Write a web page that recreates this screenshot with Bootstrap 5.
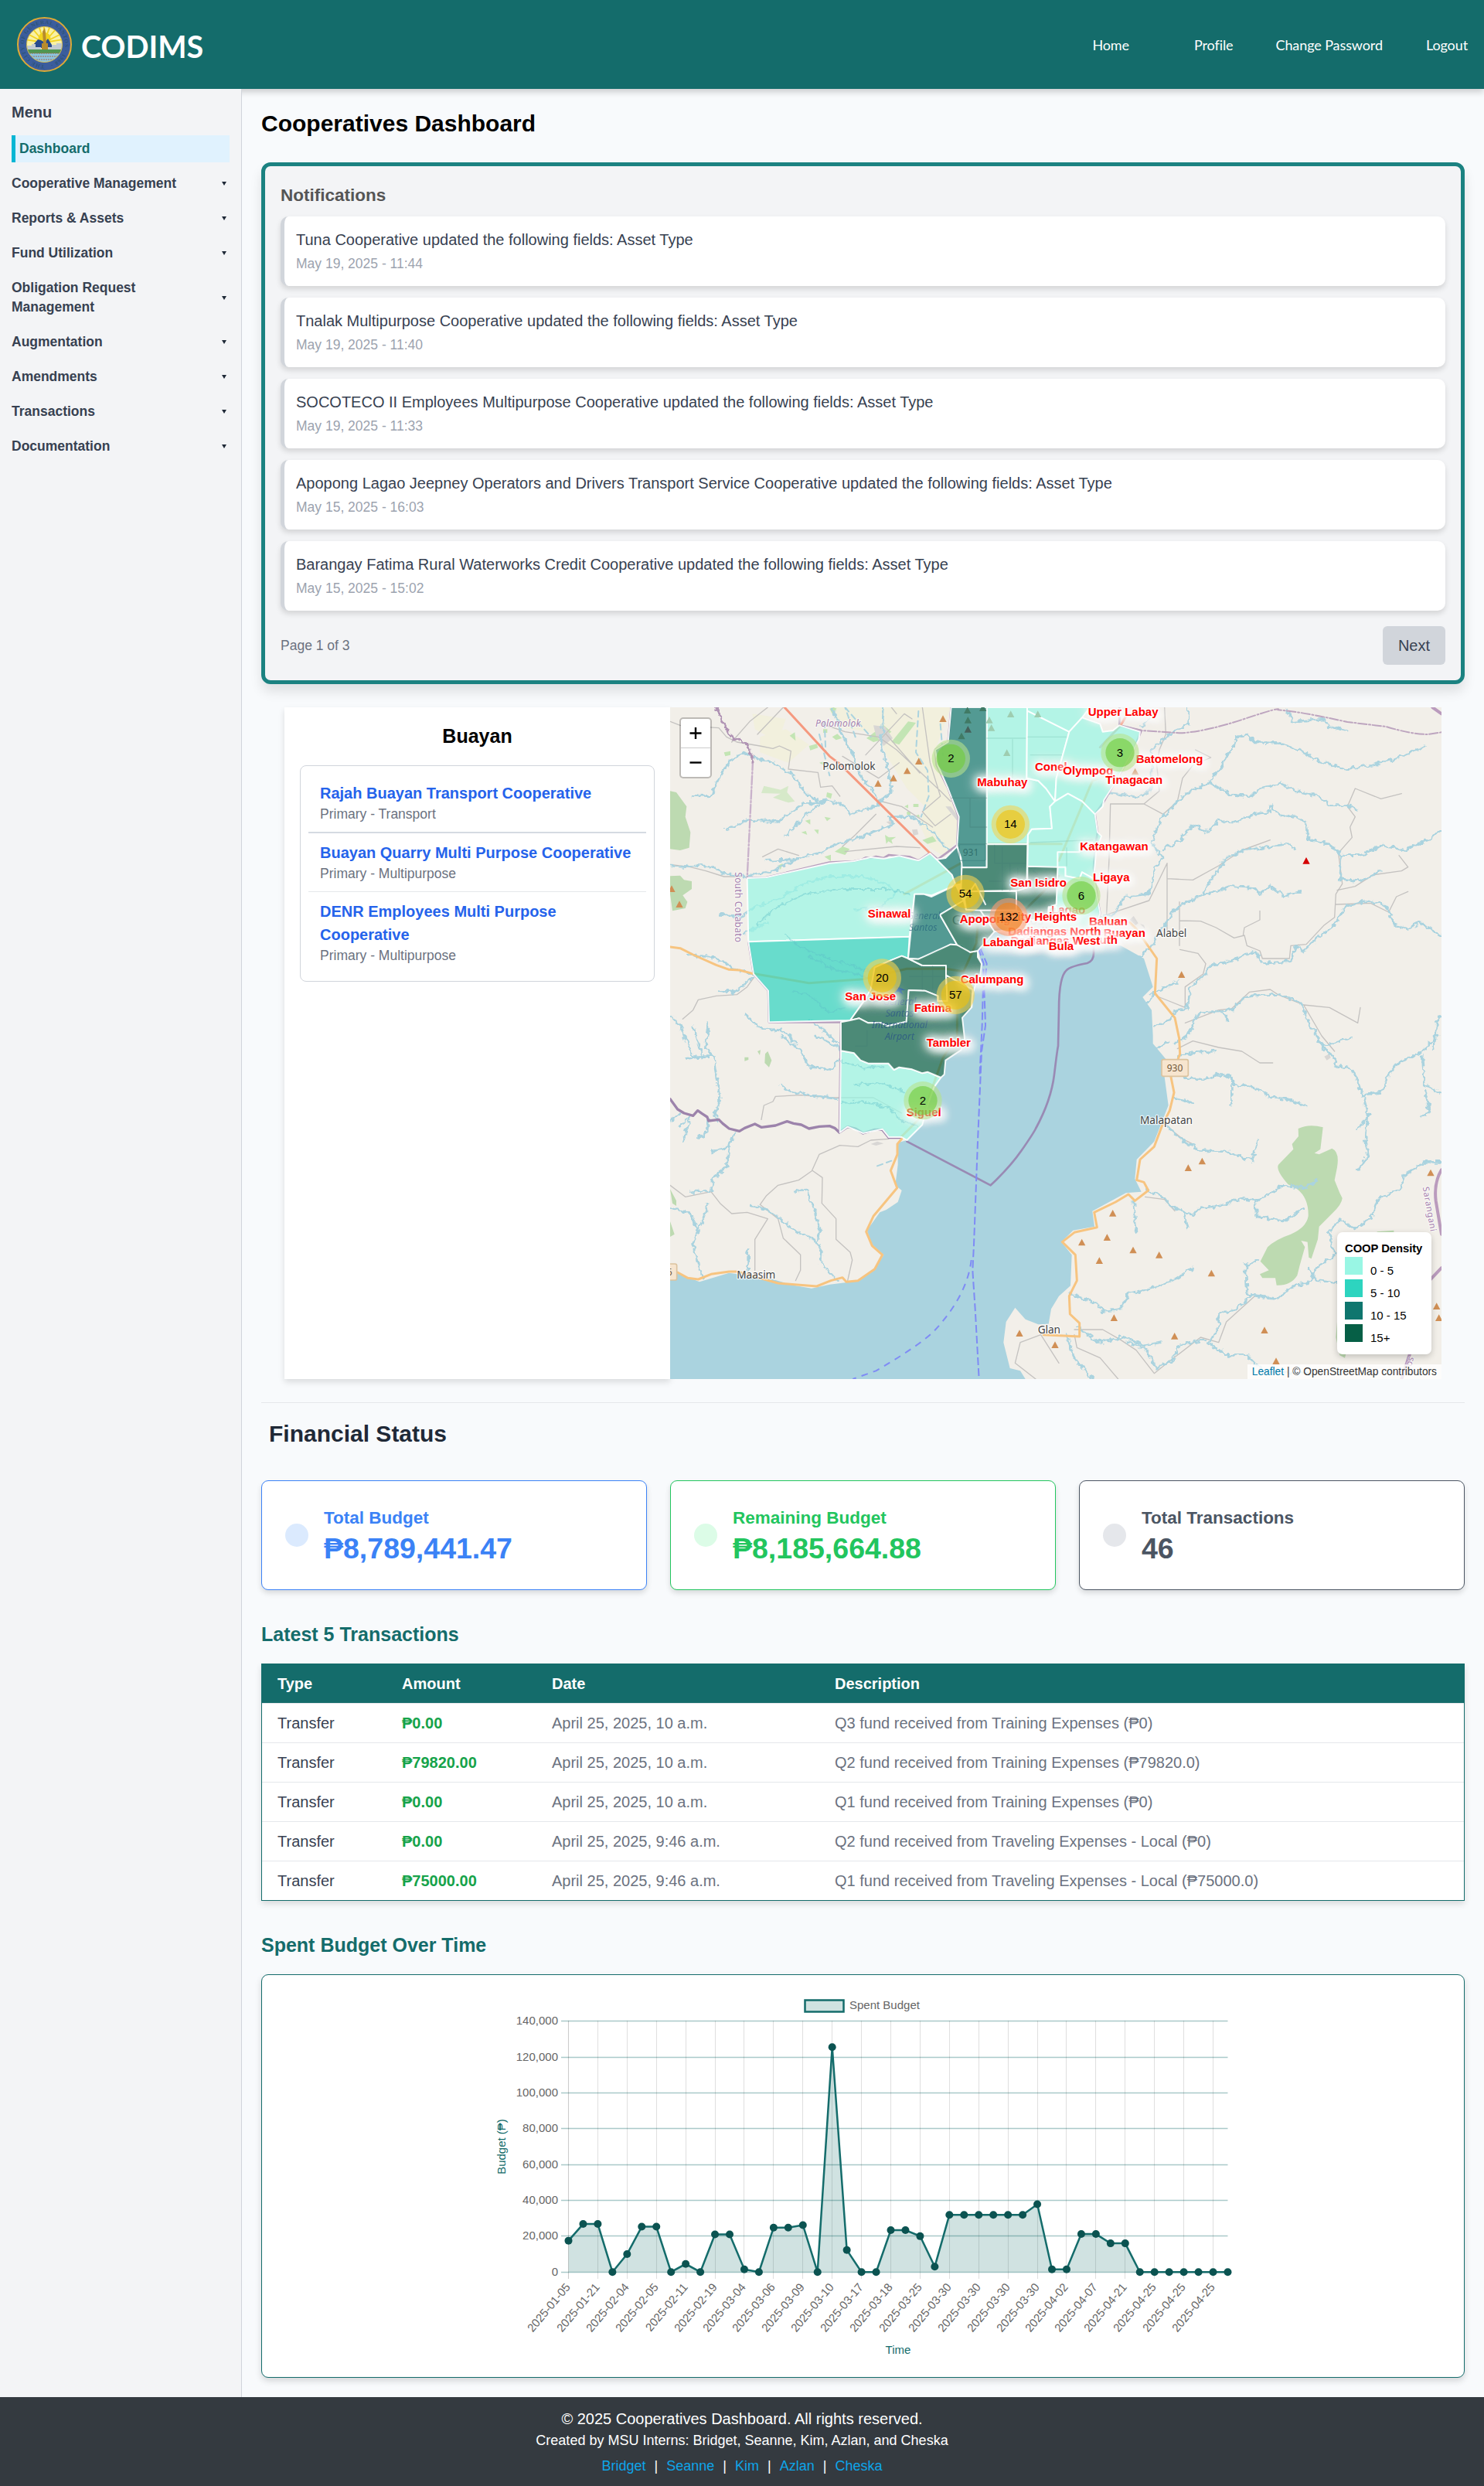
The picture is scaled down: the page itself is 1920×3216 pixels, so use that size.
<!DOCTYPE html>
<html lang="en">
<head>
<meta charset="utf-8">
<meta name="viewport" content="width=device-width, initial-scale=1">
<title>CODIMS - Cooperatives Dashboard</title>
<link href="https://cdn.jsdelivr.net/npm/bootstrap@5.3.0/dist/css/bootstrap.min.css" rel="stylesheet">
<style>
  :root { --teal: #146c6b; }
  body { font-family: "Liberation Sans", Arial, sans-serif; font-size: 20px; line-height: 30px; background: #f8fafc; color: #000; }
  h1, h2, h3, p { margin: 0; }
  .topbar { height: 115px; background: var(--teal); padding: 0 21px 0 22px; position: relative; z-index: 1; box-shadow: 0 4px 8px rgba(0,0,0,.18); }
  .brand-name { font: 700 39.5px/1 Lato, sans-serif; color: #fff; margin-left: 12px; padding-top: 5px; }
  .topnav { padding-top: 1px; }
  .topnav a { font: 400 18px/1 Lato, sans-serif; letter-spacing: -.1px; color: #fff; text-decoration: none; }
  .side { width: 313px; flex: none; background: #f3f4f6; border-right: 1px solid #d1d5db; padding: 15px; position: relative; z-index: 2; }
  .side h2 { font-size: 20px; line-height: 30px; font-weight: 700; color: #374151; margin-bottom: 15px; }
  .side a { font-size: 17.5px; line-height: 25px; font-weight: 700; color: #374151; text-decoration: none; padding: 5px 4px 5px 0; margin-bottom: 10px; }
  .side a span { max-width: 225px; }
  .side a.current { background: #e0f2fe; border-left: 5px solid #06b6d4; color: var(--teal); padding-left: 5px; }
  .side a i { border: 3px solid transparent; border-top: 5px solid #1f2937; border-bottom: 0; }
  .content { flex: 1; min-width: 0; padding: 25px; }
  .t30 { font-size: 30px; line-height: 40px; font-weight: 700; }
  .t25 { font-size: 25px; line-height: 35px; font-weight: 700; }
  .t22 { font-size: 22.5px; line-height: 35px; font-weight: 700; }
  .t17 { font-size: 17.5px; line-height: 25px; }
  .notes { margin-top: 30px; border: 5px solid #1b8281; border-radius: 12px; background: #f3f4f6; padding: 20px; box-shadow: 0 10px 15px rgba(0,0,0,.1); }
  .notes h2 { color: #555; margin-bottom: 10px; }
  .note-item { background: #fff; border-left: 5px solid #d1d5db; border-radius: 10px; padding: 15px; color: #374151; box-shadow: 0 4px 7px rgba(0,0,0,.13); margin-bottom: 15px; }
  .note-item .t17 { color: #9ca3af; margin: 4px 0 1px; }
  .btn-next { background: #d1d5db; color: #374151; font-size: 20px; line-height: 30px; padding: 10px 20px; border-radius: 6px; border: 0; }
  .geo { margin: 30px 30px 0; height: 869px; }
  .geo-list { width: 499px; padding: 20px; background: #fff; box-shadow: 0 4px 8px rgba(0,0,0,.12); }
  .geo-list h2 { color: #000; margin-bottom: 20px; }
  .coops { border: 1px solid #d1d5db; border-radius: 8px; padding: 10px; }
  .coops > div { padding: 10px 15px; border-bottom: 1px solid #e5e7eb; }
  .coops > div:first-child { border-bottom: 2px solid #d5dae2; }
  .coops > div:last-child { border: 0; }
  .coops a { color: #2563eb; font-weight: 700; text-decoration: none; }
  .coops .t17 { color: #6b7280; }
  .geo-map { width: 998px; background: #f2efe9; overflow: hidden; }
  .geo-map > svg { display: block; }
  .zoomer { position: absolute; left: 12px; top: 13px; width: 42px; border: 2px solid rgba(0,0,0,.22); border-radius: 5px; background-clip: padding-box; background-color: #fff; }
  .zoomer div + div { border-top: 1px solid #ccc; }
  .zoomer svg { display: block; margin: auto; }
  .density { position: absolute; right: 13px; bottom: 32px; width: 122px; height: 158px; background: #fff; border-radius: 7px; padding: 10px; box-shadow: 0 3px 8px rgba(0,0,0,.2); font-size: 15px; line-height: 22px; }
  .density b { display: block; white-space: nowrap; font-size: 14.8px; letter-spacing: -.05px; }
  .density .sw { width: 23px; height: 23px; margin-right: 10px; }
  .density .lg { height: 29px; }
  .density .lg span:last-child { padding-top: 7px; }
  .credit { position: absolute; right: 0; bottom: 0; background: rgba(255,255,255,.8); font-size: 13.75px; line-height: 19px; padding: 0 6px; color: #333; white-space: nowrap; }
  .credit a { color: #0078a8; text-decoration: none; }
  .redname text { font: 700 45px "Liberation Sans", sans-serif; fill: #f00; stroke: #fff; stroke-width: 10; stroke-opacity: .75; paint-order: stroke; text-shadow: 0 0 12px #fff, 4px 4px 12px #fff, 0 0 20px #fff; }
  .town { font-family: "Noto Sans", sans-serif; fill: #444; stroke: #fff; stroke-opacity: .7; stroke-width: 8; paint-order: stroke; }
  .rule { border-top: 1px solid #e5e7eb; margin-top: 30px; padding-top: 20px; }
  .rule h2.fin { color: #1f2937; padding-left: 10px; }
  .rule h2.sub { color: var(--teal); }
  .stats { gap: 30px; margin: 40px 0; }
  .stat { flex: 1; border: 1px solid; border-radius: 9px; background: #fff; padding: 30px; gap: 20px; box-shadow: 0 4px 7px rgba(0,0,0,.13); }
  .stat .dot { width: 30px; height: 30px; border-radius: 50%; }
  .stat .num { font-size: 37.5px; line-height: 45px; font-weight: 700; }
  .ledger { margin: 20px 0 40px; width: 100%; table-layout: fixed; border: 1px solid var(--teal); border-collapse: separate; border-spacing: 0; background: #fff; box-shadow: 0 4px 8px rgba(0,0,0,.13); }
  .ledger th, .ledger td { padding: 10px 20px; }
  .ledger th { background: var(--teal); color: #fff; height: 50px; }
  .ledger td { border-top: 1px solid #e5e7eb; height: 51px; color: #6b7280; }
  .ledger td:first-child { color: #374151; }
  .ledger td:nth-child(2) { color: #16a34a; font-weight: 700; }
  .plot { margin-top: 20px; height: 522px; border: 1px solid var(--teal); border-radius: 9px; background: #fff; box-shadow: 0 4px 8px rgba(0,0,0,.15); }
  .plot svg { display: block; font: 15px "Liberation Sans", sans-serif; }
  .foot { height: 115px; background: #343a40; color: #fff; text-align: center; padding-top: 13px; }
  .foot .small2 { font-size: 18px; line-height: 27px; }
  .foot a { color: #0ea5e9; text-decoration: none; margin: 0 6px; }
  .foot a:hover { text-decoration: underline; }
</style>
</head>
<body>
<header class="topbar d-flex align-items-center justify-content-between">
  <div class="d-flex align-items-center">
    <svg width="71" height="71" viewBox="0 0 71 71">
      <circle cx="35.500" cy="35.500" r="34.500" fill="#3b5d9d" stroke="#e0aa35" stroke-width="2"/>
      <defs><path id="ring" d="M35.500 62a26.500 26.500 0 1 1 .1 0"/><clipPath id="disc"><circle cx="35.500" cy="35.500" r="23"/></clipPath></defs>
      <text font-size="7" font-family="Liberation Serif, serif" font-weight="700" fill="#2c5377"><textPath href="#ring" textLength="158">THE CITY OF GENERAL SANTOS · 1968 ·</textPath></text>
      <g clip-path="url(#disc)">
        <circle cx="35.500" cy="35.500" r="23" fill="#f9f1a4"/>
        <g stroke="#f1d21e" stroke-width="1.800"><path d="M35 33L14 22M35 33L20 15M35 33L28 11M35 33V10M35 33L43 11M35 33L51 15M35 33L57 22M35 33L60 29M35 33L10 29"/></g>
        <circle cx="35.500" cy="28" r="8" fill="#f1d21e"/>
        <path d="M20 37L27 29L31 30L36 33L40 28L45 36L50 40H18Z" fill="#274a8c"/>
        <path d="M12 37h7v-2h5v4h7v5H12zM40 39h5v-3h6v-2h8v10H40z" fill="#c2cbd0"/>
        <path d="M12 42h48v6H12z" fill="#4f9652"/>
        <path d="M12 47h48v13H12z" fill="#8cc4df"/>
        <path d="M13 47h45M18 51h36M22 55h28" stroke="#a06d4e" stroke-width="1.200" stroke-dasharray="2 1"/>
        <path d="M33 19l3-5 1 6 1 14h2v8H32v-8h2z" fill="#b78b2d"/>
      </g>
      <circle cx="35.500" cy="35.500" r="23" fill="none" stroke="#d5ba51" stroke-width="1"/>
    </svg>
    <div class="brand-name">CODIMS</div>
  </div>
  <nav class="topnav d-flex align-items-center">
    <a href="#" style="margin-right:84px">Home</a><a href="#" style="margin-right:55px">Profile</a><a href="#" style="margin-right:56px">Change Password</a><a href="#">Logout</a>
  </nav>
</header>

<div class="d-flex align-items-stretch">
  <aside class="side">
    <h2>Menu</h2>
    <nav class="d-flex flex-column">
      <a class="current" href="#">Dashboard</a>
      <a class="d-flex align-items-center justify-content-between" href="#"><span>Cooperative Management</span><i></i></a>
      <a class="d-flex align-items-center justify-content-between" href="#"><span>Reports &amp; Assets</span><i></i></a>
      <a class="d-flex align-items-center justify-content-between" href="#"><span>Fund Utilization</span><i></i></a>
      <a class="d-flex align-items-center justify-content-between" href="#"><span>Obligation Request<br>Management</span><i></i></a>
      <a class="d-flex align-items-center justify-content-between" href="#"><span>Augmentation</span><i></i></a>
      <a class="d-flex align-items-center justify-content-between" href="#"><span>Amendments</span><i></i></a>
      <a class="d-flex align-items-center justify-content-between" href="#"><span>Transactions</span><i></i></a>
      <a class="d-flex align-items-center justify-content-between" href="#"><span>Documentation</span><i></i></a>
    </nav>
  </aside>

  <main class="content">
    <h1 class="t30">Cooperatives Dashboard</h1>

    <section class="notes">
      <h2 class="t22">Notifications</h2>
      <div class="note-item"><p>Tuna Cooperative updated the following fields: Asset Type</p><p class="t17">May 19, 2025 - 11:44</p></div>
      <div class="note-item"><p>Tnalak Multipurpose Cooperative updated the following fields: Asset Type</p><p class="t17">May 19, 2025 - 11:40</p></div>
      <div class="note-item"><p>SOCOTECO II Employees Multipurpose Cooperative updated the following fields: Asset Type</p><p class="t17">May 19, 2025 - 11:33</p></div>
      <div class="note-item"><p>Apopong Lagao Jeepney Operators and Drivers Transport Service Cooperative updated the following fields: Asset Type</p><p class="t17">May 15, 2025 - 16:03</p></div>
      <div class="note-item mb-0"><p>Barangay Fatima Rural Waterworks Credit Cooperative updated the following fields: Asset Type</p><p class="t17">May 15, 2025 - 15:02</p></div>
      <div class="d-flex justify-content-between align-items-center" style="margin-top:20px">
        <span class="t17" style="color:#6b7280">Page 1 of 3</span>
        <button class="btn btn-next">Next</button>
      </div>
    </section>

    <section class="geo d-flex">
      <div class="geo-list">
        <h2 class="t25 text-center">Buayan</h2>
        <div class="coops">
          <div><a href="#">Rajah Buayan Transport Cooperative</a><p class="t17">Primary - Transport</p></div>
          <div><a href="#">Buayan Quarry Multi Purpose Cooperative</a><p class="t17">Primary - Multipurpose</p></div>
          <div><a href="#">DENR Employees Multi Purpose Cooperative</a><p class="t17">Primary - Multipurpose</p></div>
        </div>
      </div>
      <div class="geo-map position-relative">
        <svg width="998" height="869" viewBox="21 15 2994 2607" fill="none" stroke-linejoin="round" stroke-linecap="round">
          <defs>
            <filter id="wob" x="0" y="0" width="3040" height="2640" filterUnits="userSpaceOnUse"><feTurbulence type="fractalNoise" baseFrequency=".05" numOctaves="2" seed="4"/><feDisplacementMap in="SourceGraphic" scale="26" xChannelSelector="R" yChannelSelector="G"/></filter>
            <path id="peak" d="M0-14L14 12H-14Z"/>
          </defs>
          <rect x="21" y="15" width="2994" height="2607" fill="#f2efe9"/>
          <!-- farmland and vegetation -->
          <path fill="#f1f0d8" d="M640 15H1110L1050 180L1100 330L1140 440L1130 540L1080 590L1030 560L990 470L1010 400L940 330L860 200L830 120L680 90ZM340 40L470 60L440 150L350 100ZM370 130L470 100L560 160L480 230L370 190Z" opacity=".75"/>
          <g fill="#bddab1">
            <path d="M21 340L45 345L85 400L80 440L100 500L95 560L60 570L21 565ZM21 670L60 668L75 685L105 690L105 720L70 745L88 770L80 795L30 805L21 740Z"/>
            <path d="M2459 1650Q2500 1630 2555 1645L2545 1730L2522 1745L2540 1750L2590 1727Q2620 1740 2610 1800L2600 1850L2620 1900L2630 1920Q2628 1945 2590 1980L2540 2030L2535 2080L2510 2155L2500 2150L2495 2090L2470 2085L2485 2110L2465 2180L2455 2220Q2430 2260 2375 2258L2370 2230L2320 2230L2310 2215L2345 2200L2312 2165L2340 2110Q2370 2080 2430 2060Q2490 2035 2498 1990Q2500 1920 2455 1885L2420 1867Q2370 1810 2382 1790L2440 1730L2435 1710L2460 1680Z"/>
            <path d="M2610 2400L2650 2500L2640 2540L2620 2530L2605 2460ZM2765 2050L2830 2045V2060H2765Z"/>
            <path d="M21 1885L45 1930L45 1950L30 1940ZM21 2010L38 2060L21 2070ZM390 1360L400 1350L415 1385L405 1412L388 1395ZM310 1373l15 0v10l-15 5zM360 1350l12-5-3 20z"/>
          </g>
          <g fill="#c3e5b4">
            <path d="M650 130L670 118L688 135L665 142ZM485 125L505 112L508 145ZM783 135L850 85L880 110L830 145L810 150ZM880 150L945 70L975 75L910 160ZM560 165l30-8 5 15-30 10zM230 190l25-5v15l-20 5zM630 345l20 5-5 20-18-8zM545 455l20-5 0 20zM620 440l25 5-15 12zM580 490l18 0-3 18zM530 500l18-5 5 15zM855 510L870 520L898 518L880 530L885 545L868 535L860 545ZM660 575L690 555L718 565L700 588ZM1000 530L1040 515L1055 535L1020 545ZM930 400l15-8v15zM965 390h20v12h-20zM940 420h14v12h-14zM975 435l12-4 3 14zM620 595l25-8v25zM440 630l18-10-8 25zM640 20L655 15L668 20L650 40ZM615 100h16v14h-16zM600 230l18-5v16z"/>
            <path d="M385 320L450 335L480 320L475 345L505 380L480 385L420 365L450 350L375 348Z" opacity=".6"/>
          </g>
          <path fill="#d8d6d4" d="M810 85l45 5 30 45-35 30-30-40zM960 490l20-2 5 20-20 5zM860 460l20-5v20zM1090 400l20 0 30 40-5 15zM800 1710l25-10 25 8-30 8zM1805 840l15-15 18 28-10 8zM1845 855l15 5 5 15zM2560 1370l20-10 5 15-15 10z"/>
          <!-- small roads -->
          <g stroke="#c4c2c0" stroke-width="4">
            <path d="M21 70L60 85L210 95L240 130L280 150L370 165L420 175L445 165L490 185L480 255L595 268L605 325L650 320L680 360M400 15L330 70L260 150M460 15L360 120M600 75L700 110L830 130L900 180L1070 340L1110 380M1070 360L1000 420L1050 475L1110 430M820 375L920 400L1040 480M690 205L830 290L910 230M780 200L930 40L960 60M860 120L990 270M1000 15L1030 230L1070 360M380 595L440 565L520 590M700 575L900 555L990 560M820 430L740 510L690 555M21 625L100 635L160 650L230 672L300 672M70 1225L110 1190L130 1150L200 1135L280 1130L320 1100L345 1065M375 1615L385 1560L420 1545L430 1525L530 1520L650 1530L810 1530L920 1590M21 1870L80 1915L180 1895L215 1940L260 1980L320 1975L400 2000L350 2080L350 2200M570 1815L520 1850L440 1870L395 1910L370 1945L440 2000L460 2075L527 2140L527 2200L508 2240M870 1690L800 1695L750 1720L680 1715L600 1750L572 1812L612 1840L610 1940L665 2000L665 2080L720 2130L728 2160L710 2240"/>
            <path d="M1940 15L1945 120L1920 180L1910 240L1920 340L1860 390H1730L1725 600L1715 820L1880 765L1950 620V890M1950 680L2050 685L2150 630L2240 570L2350 530M1860 390L1935 430L1990 380L2010 290L2050 240L2120 210L2060 180M1998 770V940M1998 843L2080 845L2140 870L2210 910L2250 900L2260 940L2310 960L2320 990H2425L2430 940L2490 935L2560 860L2600 830L2605 740L2630 700L2615 580L2668 520L2660 480L2680 440L2650 400L2680 330L2780 370L2860 350M2245 900L2250 870L2310 840L2310 805M2000 955L2070 970L2100 1010L2090 1050L2020 1100L2020 1180L1920 1140M2610 725L2680 710L2750 665L2860 650L2885 635L2850 590M2605 780L2740 775L2810 810L2840 750L2885 730M2480 1170L2580 1180L2690 1240L2700 1180M1990 1340L2050 1310L2150 1335L2240 1350L2310 1395L2360 1395M2020 1240L2150 1190L2200 1185L2270 1120L2350 1110L2380 1130L2480 1170L2550 1290L2600 1350M1960 1650L2010 1690L2050 1710M1865 1915L1940 1925L1980 1970M1530 2560L1460 2450L1380 2480L1360 2560L1440 2622M1590 2430L1700 2430L1770 2470L1830 2510L1900 2600L1950 2560L2080 2460L2150 2480L2180 2400L2290 2300M1590 2450L1600 2500L1690 2540L1760 2622M880 15L900 40"/>
          </g>
          <!-- rivers -->
          <g stroke="#aad3df" stroke-width="8" filter="url(#wob)">
            <path d="M110 355L180 360L210 290L245 230L300 190L360 215L420 230L500 280L540 340L600 385L640 375L700 400L720 430L830 395L830 370L760 280L730 200L690 120L650 15M235 490L330 450L440 460L540 385L590 385M470 515L540 440L600 395M390 610L500 605L600 580L670 545L760 520L830 490L890 470L870 440L970 440L1040 500L1110 580M830 390L880 340L870 260L840 170L850 15M21 630L80 635L130 625L180 635L230 660L320 670L420 650L520 600M215 820L300 825L350 790L440 760L540 700L640 670L760 670L860 700L900 730L840 790L740 800M310 890L400 850M85 970L200 990L260 1025L345 1050M210 1115L270 1120L320 1080L345 1065M315 1210L370 1260L460 1270L510 1320M560 1230L620 1270L670 1320M21 1210L60 1250L110 1370L190 1370L200 1450L215 1540L195 1600L210 1620M110 1250L150 1380M170 1240L160 1340L190 1370M85 1378L150 1370M450 1290L520 1340L560 1410L640 1420L680 1380M590 1290L680 1340M450 1480L480 1505L560 1520L670 1535M21 1625L60 1590M60 1640L100 1600L70 1700M170 1620L165 1660L130 1690M270 1670L250 1720L185 1740M250 1720L240 1800L190 1840L180 1890L100 1895M21 1960L95 1975L130 2040L155 1990L165 1940M130 2040L110 2100L130 2180L150 2235M340 1950L400 1965L510 2050L590 2085L610 2130L605 2170L670 2240M505 1895L550 1890L580 1960L600 2040L595 2080M323 2120V2200M1300 2290L1340 2340"/>
            <path d="M1720 350L1780 355L1840 365L1890 330L1890 180L1960 120L2030 80V15M1850 90L1880 60M2410 20L2440 70L2560 60L2580 90L2650 108M2950 165L2850 210L2750 240L2640 255L2530 220L2460 180L2390 155L2290 150L2260 120L2220 130L2200 180L2180 200L2160 250L2110 310L2030 345L1990 380L1940 430L1910 480L1890 540L1935 600L1900 640L1880 740L1790 750L1740 820L1690 830M2120 310L2200 355L2280 360L2310 330L2390 310L2450 340L2540 360L2580 395L2650 395L2690 415M1930 570L2000 530L2050 470L2110 500L2150 450L2200 465L2290 430L2350 420L2355 395L2380 430L2440 440L2490 460L2500 530L2580 545L2630 590L2700 590L2780 550L2870 570L2960 530L3015 490M2450 570L2420 545L2350 555L2250 570L2180 600L2130 670L2100 720L2090 745L2030 770L1980 800L1940 860L1890 940L1840 985M2090 745L2190 710L2290 715L2310 740L2350 710L2400 745L2470 730M2630 590L2620 680L2700 690L2780 650M3015 900L2960 870L2930 850L2880 875L2830 860L2820 820L2790 780L2730 765L2640 790L2600 860L2520 920L2480 960L2450 940L2430 1000L2320 1010L2290 960L2200 1000L2120 1020L2090 1060L2040 1100L2030 1180L1990 1190L1960 1230L1900 1255M1980 1320L2030 1290L2070 1200L2200 1190L2250 1140L2330 1130L2390 1130L2470 1160L2490 1220L2530 1290L2560 1330L2660 1300M2160 1195L2190 1235M1900 1340L1960 1310M3015 1210L3000 1230L2985 1340M1990 1370L2050 1355L2140 1350M2000 1450L2090 1460L2140 1440L2200 1445L2210 1480L2290 1490L2360 1530L2430 1540L2485 1560M2200 1460V1555M1980 1530L2050 1550M2540 1310L2560 1345L2600 1370L2600 1400L2670 1420L2710 1520L2780 1510L2810 1440L2850 1390L2930 1360L2970 1320L3000 1290M2710 1520L2730 1590L2720 1700L2730 1760L2690 1810M2740 1590L2690 1650M2940 1370L2950 1480L3010 1510M2950 1500L2970 1590L2940 1600M3015 1780L2950 1780L2870 1830L2860 1880L2770 1920L2740 2000L2680 2040L2620 2000L2580 2050L2600 2140L2530 2190L2500 2250L2440 2260L2380 2310L2310 2300L2260 2290L2255 2180L2300 2160M2500 2190L2530 2240L2620 2250M2290 2290L2220 2350L2150 2370L2150 2430L2110 2480L2180 2530L2260 2530L2320 2590L2500 2600M1950 1640L2000 1690L2080 1735L2180 1740L2280 1775L2300 1700M1870 1890L1930 1910L1960 1950L2050 1985L2070 1960L2150 1950L2240 1920L2300 1930L2400 1870L2480 1880L2530 1855M2290 1930L2300 1990L2400 2010L2480 1960M1820 1930L1830 2050M2010 1960L2030 2040M1570 2290L1680 2330L1700 2360L1770 2350L1800 2290L1890 2270L1990 2230L2050 2190M1600 2420L1680 2480L1780 2460L1860 2490L1930 2480M1800 2480L1860 2500L1910 2580L1970 2550L2000 2490L2100 2470M1560 2450L1590 2540L1660 2622M1870 1170L1900 1120L1990 1080"/>
          </g>
          <g stroke="#aad3df" stroke-width="6" stroke-dasharray="22 16"><path d="M620 70L625 190M740 130L700 15M985 30L975 190L1020 260L1025 360L995 440M1070 80L1080 200M700 15L800 130M825 1795L880 1775M600 120L640 280"/></g>
          <!-- sea -->
          <path fill="#aad3df" d="M1280 885L1240 920L1215 950L1230 1010L1200 1100L1195 1180L1155 1220L1165 1310L1150 1345L1090 1385L1085 1440L1050 1480L1000 1635L940 1695L905 1705L905 1790L895 1870L920 1890L905 1935L860 1965L835 1975L785 2045L805 2100L850 2140L815 2195L750 2240L700 2248L640 2255L570 2270L500 2258L420 2235L250 2210L135 2245L60 2215L21 2205V2622H1400L1380 2590L1340 2580L1315 2480L1325 2400L1360 2345L1400 2390L1450 2410L1490 2408L1500 2350L1530 2300L1575 2260L1580 2140L1540 2090L1585 2045L1668 2030L1660 1970L1790 1900L1850 1895L1825 1845L1832 1770L1900 1700L1955 1560L1940 1450L1945 1380L1895 1320L1895 1290L1890 1190L1855 1140L1895 1100L1860 990L1770 940L1660 930L1560 955L1400 910Z"/>
          <path stroke="#c9b2cb" stroke-width="7" stroke-dasharray="34 8 6 8" d="M342 225L320 678"/>
          <path stroke="#b093b4" stroke-width="9" stroke-dasharray="22 7" filter="url(#wob)" d="M200 15L235 90L260 130L325 160L342 225"/>
          <path stroke="#b79fbd" stroke-width="8" d="M320 678L395 675L640 617L735 612L765 606L780 598L800 600L820 594L850 600L870 588L910 592L950 595L985 610L1030 580L1060 605L1135 550L1140 440L1100 330L1055 240L1050 180L1100 150L1112 15M1765 15L1765 85L1850 105L1820 180L1740 320L1705 380L1670 430L1680 500L1670 560L1665 640L1680 760L1690 815L1665 900M325 925L345 1050L402 1115L405 1237H684L678 1665"/>
          <path stroke="#9c83ab" stroke-width="10" d="M21 1535L50 1575L75 1590L110 1600L128 1580L145 1592L165 1605L170 1620L210 1615L225 1630L250 1650L290 1660L310 1648L350 1632L375 1645L430 1638L475 1622L500 1630L530 1635L560 1650L600 1642L640 1640L660 1648L678 1665L710 1643L740 1650L770 1668L815 1654L845 1654L870 1685H920"/>
          <path stroke="#998ab4" stroke-width="8" d="M940 1700L1265 1870Q1340 1800 1385 1735T1440 1650Q1500 1540 1512 1440T1527 1330L1530 1190Q1530 1060 1560 1035Q1575 1020 1640 1008Q1665 1000 1665 970V900"/>
          <path stroke="#bda5bf" stroke-width="6" stroke-dasharray="34 8 6 8" d="M1765 85L1850 105L2000 115Q2100 110 2250 60T2380 25Q2460 30 2650 72L2800 90Q2900 120 2960 120L3015 112"/>
          <path stroke="#ba9bbd" stroke-width="12" d="M3015 1810Q2985 1860 2993 1930L3015 2060M3015 2190L2940 2270Q2890 2400 2900 2500L2860 2622M2980 15L3015 40"/>
          <g stroke="#7f8bf5" stroke-width="6" stroke-linecap="butt"><path stroke-dasharray="30 12" d="M1225 950L1250 1010L1240 1110L1245 1250L1230 1350L1215 1700L1200 2100L1195 2200L1205 2350L1220 2622M1218 950L1238 1010L1232 1250L1222 1450"/><path stroke-dasharray="26 22" d="M1190 2160Q1175 2290 1060 2420Q1010 2480 820 2590L730 2622"/></g>
          <g stroke="#f7c480" stroke-width="9"><path d="M21 945L60 950L110 975L200 1015L250 1033L290 1035L340 1048M1805 850L1830 875L1910 990L1903 1125L1980 1220L1997 1300L2000 1360L1985 1400L1965 1450L1977 1510L1960 1580L1930 1640L1900 1720L1845 1770L1832 1850L1860 1858L1877 1890L1825 1930L1800 1905L1750 1935L1667 1975L1678 2033L1590 2053L1543 2090L1594 2140L1600 2240L1570 2300L1573 2370L1610 2405V2457L1470 2450M920 1690L903 1710V1750L877 1813L902 1880L810 1990L782 2050L805 2105L845 2140L815 2195L750 2240L705 2245L690 2228L645 2240L590 2262L440 2250L280 2205H250L180 2215L130 2235L90 2230L50 2208"/>
            <path d="M340 1048L560 1085L770 1070L940 1030H1090L1160 1040L1210 930L1215 860L1160 740M930 740L1150 620M1250 545H1540M1135 1180V1290L1080 1375L1000 1600L920 1680M1530 610L1660 300L1740 270"/></g>
          <path stroke="#f5997f" stroke-width="9" d="M465 15L640 205L680 235L1030 582M1790 15V50L1770 85"/>
          <path stroke="#dcaa8c" stroke-width="9" d="M1770 85L1690 170M1400 800L1530 670"/>
          <text x="1115" y="857" font-size="50" font-family="Noto Sans, sans-serif" fill="#555">General Santos</text>
          <!-- barangay density -->
          <g fill-opacity=".7" stroke="#fff" stroke-width="6" stroke-opacity=".9">
            <g fill="#99f6e4">
              <path d="M320 678L395 675L640 620L735 612L800 597L850 602L910 592L985 610L1030 582L1055 605L1115 665L1130 705L1035 745L1005 740L970 740L950 905L325 925Z"/>
              <path d="M684 1348L735 1357L760 1385L790 1397H868L890 1422L910 1412L960 1420L1000 1435L1020 1430L1072 1452L1045 1490L1020 1560L1000 1635L940 1695L920 1683H870L845 1652L770 1668L710 1643L680 1665Z"/>
              <path d="M1250 15H1407L1405 290L1450 300L1480 330L1515 380L1495 400L1503 485L1425 488L1410 510L1408 547H1250Z"/>
              <path d="M1407 28L1570 110L1520 290L1515 380L1480 330L1450 300L1405 290Z"/>
              <path d="M1407 15H1650L1620 55L1570 110L1407 28Z"/>
              <path d="M1570 110L1620 55L1690 80L1700 110L1740 105L1765 85L1845 110L1840 140L1820 180L1740 320L1705 375L1700 400L1670 430L1620 380L1565 350L1515 380L1520 290Z"/>
              <path d="M1515 380L1565 350L1620 380L1670 430L1680 500L1695 515L1675 570L1665 680L1620 655L1610 680L1555 670V640L1408 632L1410 510L1425 488L1503 485L1495 400Z"/>
              <path d="M1525 635H1555V670L1610 680L1620 655L1665 680L1680 760L1690 815L1660 900L1560 930L1500 870L1490 795L1520 780Z"/>
            </g>
            <path fill="#2dd4bf" d="M325 925L950 905L945 990L920 980L870 1000L815 1025L800 1110L770 1160L720 1230L405 1237L402 1115L345 1050Z"/>
            <g fill="#0f766e">
              <path d="M1112 15H1250V637H1153L1150 600L1135 555L1142 440L1100 330L1060 240L1050 180L1100 150Z"/>
              <path d="M1135 555L1153 620V700L1130 705L1115 665L1055 605L1090 600Z"/>
              <path d="M970 740L1005 740L1035 750L1130 705L1160 765L1068 820L1135 937L1110 935L1060 965L985 992L945 990Z"/>
            </g>
            <g fill="#065f46">
              <path d="M870 1000L920 980L945 990L1000 1017H1092V1055L1097 1155L1060 1155V1135L1010 1115L947 1113L938 1235L865 1252L840 1240L790 1240L755 1222L720 1230L770 1160L800 1110L815 1025Z"/>
              <path d="M945 990L985 992L1110 935L1155 938L1185 965L1215 960V985L1230 1010L1225 1050L1205 1095L1195 1130L1092 1055V1017H1000Z"/>
              <path d="M947 1113L1010 1115L1060 1135V1155H1097L1092 1055L1195 1110L1190 1180L1155 1220L1165 1310L1150 1345L1090 1385L1085 1440L1072 1452L1020 1430L1000 1435L960 1420L910 1412L890 1422L868 1397H790L760 1385L735 1357L684 1348V1237L720 1230L755 1222L790 1240L840 1240L865 1252L938 1235Z"/>
              <path d="M1068 820L1160 765L1170 800H1225L1280 885L1215 960L1185 965L1135 937Z"/>
              <path d="M1250 547H1408L1405 725L1150 730L1153 637H1250Z"/>
              <path d="M1160 730L1365 728V803H1225L1170 800Z"/>
              <path d="M1408 632L1525 635L1520 780L1490 795L1485 840H1400L1365 803V728L1408 715Z"/>
              <path d="M1225 803H1365L1400 840L1370 875L1280 885Z"/>
            </g>
            <path d="M1490 790h30v30h-30zM1525 635V577H1610V545L1660 540M1160 765L1205 700L1245 780"/>
          </g>
          <path stroke="#e8fbf7" stroke-opacity=".75" fill="#b3dcd3" fill-opacity=".7" d="M1400 850H1500L1560 930L1420 915L1370 895Z"/>
          <g stroke="#437b76" stroke-opacity=".35" stroke-width="4"><path d="M1112 367H1250M1185 367V480H1250M1140 545H1250M1280 550V620H1400M1310 560V725M1260 690H1400M1340 620V725M1370 640V790M1430 650L1500 700M1200 860L1260 900M950 1060H1080M1000 1020V1110M1040 1020V1110M785 1270V1330H740"/></g>
          <g stroke="#7fc7b8" stroke-opacity=".4" stroke-width="4"><path d="M1250 135H1400M1350 140V290M1410 130H1560M1420 200H1540M1420 540L1660 530M1560 560V630"/></g>
          <g stroke="#5dbfc9" stroke-opacity=".4" stroke-width="6" filter="url(#wob)"><path d="M470 900L530 950L640 990L790 1040M560 980L650 1030L780 1060M500 1120L560 1130L640 1200L700 1180M360 860L420 800L540 740L700 720L860 720L950 740M690 1390L770 1415L850 1405M735 1480L830 1470L930 1505M690 1550L780 1545L870 1570L920 1620L980 1640"/></g>
          <g font-family="Noto Sans, sans-serif" font-style="italic">
            <g fill="#a57fae" stroke="#fff" stroke-width="6" stroke-opacity=".6" paint-order="stroke" font-size="36"><text x="585" y="90" textLength="175">Polomolok</text><text transform="translate(272 655) rotate(90)" font-style="normal" textLength="272">South Cotabato</text><text transform="translate(2942 1878) rotate(80)" font-style="normal" font-size="34" textLength="175">Sarangani</text><text transform="translate(2898 2575) rotate(-75)" font-style="normal" font-size="34">os</text></g>
            <g fill="#23607c" opacity=".65" font-size="37" text-anchor="middle"><text x="1005" y="838">General</text><text x="1003" y="882">Santos</text></g>
            <g fill="#264f86" opacity=".7" font-size="37" text-anchor="middle"><text x="912" y="1171">General</text><text x="912" y="1215">Santos</text><text x="912" y="1260">International</text><text x="912" y="1305">Airport</text></g>
          </g>
          <path fill="#2f65a0" d="M900 1098L935 1112L918 1114L925 1130L908 1118L890 1122Z"/>
          <g font-family="Noto Sans, sans-serif"><rect x="1143" y="548" width="102" height="62" rx="6" stroke="#3b827f" stroke-opacity=".5" stroke-width="4"/><text x="1157" y="592" fill="#24605e" fill-opacity=".75" font-size="36">931</text>
            <rect x="1929" y="1382" width="103" height="65" rx="7" fill="#f7e5cf" stroke="#dcc39f" stroke-width="5"/><text x="1980" y="1427" fill="#6f5638" font-size="36" text-anchor="middle">930</text>
            <rect x="-40" y="2175" width="87" height="63" rx="7" fill="#f7e5cf" stroke="#dcc39f" stroke-width="5"/><text x="8" y="2219" fill="#6f5638" font-size="36">6</text></g>
          <g class="town"><text x="613" y="259" font-size="41" textLength="205">Polomolok</text><text x="1908" y="905" font-size="41" textLength="118">Alabel</text><text x="1845" y="1632" font-size="41" textLength="204">Malapatan</text><text x="280" y="2232" font-size="41" textLength="150">Maasim</text><text x="1448" y="2445" font-size="41" textLength="88">Glan</text></g>
          <g id="peaks"></g>
          <g class="redname">
            <text x="1643" y="48">Upper Labay</text><text x="1437" y="261">Conel</text><text x="1546" y="276">Olympog</text><text x="1829" y="231">Batomelong</text><text x="1711" y="312">Tinagacan</text><text x="1213" y="321">Mabuhay</text><text x="1612" y="570">Katangawan</text><text x="1662" y="691">Ligaya</text><text x="1342" y="711">San Isidro</text><text x="788" y="831">Sinawal</text><text x="1145" y="852">Apopong</text><text x="1500" y="815" opacity=".8">Lagao</text>
            <text x="1390" y="900" opacity=".5">Dadiangas East</text><text x="1647" y="861">Baluan</text><text x="1703" y="906">Buayan</text><text x="1390" y="932">Dadiangas South</text><text x="1333" y="900">Dadiangas North</text><text x="1337" y="843">City Heights</text><text x="1343" y="936">Dadiangas West</text><text x="1235" y="942">Labangal</text><text x="1490" y="957">Bula</text>
            <text x="1148" y="1086">Calumpang</text><text x="700" y="1152">San Jose</text><text x="968" y="1197">Fatima</text><text x="1016" y="1332">Tambler</text><text x="938" y="1602">Siguel</text>
          </g>
          <g id="clusters" font-family="Liberation Sans, sans-serif" font-size="45" text-anchor="middle"></g>
        </svg>
        <div class="zoomer"><div><svg width="38" height="37"><path d="M11.500 18.500h15M19 11v15" stroke="#000" stroke-width="2.400"/></svg></div><div><svg width="38" height="37"><path d="M11.500 18.500h15" stroke="#000" stroke-width="2.400"/></svg></div></div>
        <div class="density"><b>COOP Density</b>
          <div class="lg d-flex"><span class="sw" style="background:#99f6e4"></span><span>0 - 5</span></div>
          <div class="lg d-flex"><span class="sw" style="background:#2dd4bf"></span><span>5 - 10</span></div>
          <div class="lg d-flex"><span class="sw" style="background:#0f766e"></span><span>10 - 15</span></div>
          <div class="lg d-flex"><span class="sw" style="background:#065f46"></span><span>15+</span></div>
        </div>
        <div class="credit"><a href="#">Leaflet</a> | © OpenStreetMap contributors</div>
      </div>
    </section>

    <section class="rule">
      <h2 class="t30 fin">Financial Status</h2>
      <div class="stats d-flex">
        <div class="stat d-flex align-items-center" style="color:#3b82f6"><span class="dot" style="background:#dbeafe"></span><div><div class="t22">Total Budget</div><div class="num">₱8,789,441.47</div></div></div>
        <div class="stat d-flex align-items-center" style="color:#22c55e"><span class="dot" style="background:#dcfce7"></span><div><div class="t22">Remaining Budget</div><div class="num">₱8,185,664.88</div></div></div>
        <div class="stat d-flex align-items-center" style="color:#4b5563"><span class="dot" style="background:#e5e7eb"></span><div><div class="t22">Total Transactions</div><div class="num">46</div></div></div>
      </div>
      <h2 class="t25 sub">Latest 5 Transactions</h2>
      <table class="ledger">
        <colgroup><col style="width:161px"><col style="width:194px"><col style="width:366px"><col></colgroup>
        <thead><tr><th>Type</th><th>Amount</th><th>Date</th><th>Description</th></tr></thead>
        <tbody>
          <tr><td>Transfer</td><td>₱0.00</td><td>April 25, 2025, 10 a.m.</td><td>Q3 fund received from Training Expenses (₱0)</td></tr>
          <tr><td>Transfer</td><td>₱79820.00</td><td>April 25, 2025, 10 a.m.</td><td>Q2 fund received from Training Expenses (₱79820.0)</td></tr>
          <tr><td>Transfer</td><td>₱0.00</td><td>April 25, 2025, 10 a.m.</td><td>Q1 fund received from Training Expenses (₱0)</td></tr>
          <tr><td>Transfer</td><td>₱0.00</td><td>April 25, 2025, 9:46 a.m.</td><td>Q2 fund received from Traveling Expenses - Local (₱0)</td></tr>
          <tr><td>Transfer</td><td>₱75000.00</td><td>April 25, 2025, 9:46 a.m.</td><td>Q1 fund received from Traveling Expenses - Local (₱75000.0)</td></tr>
        </tbody>
      </table>
      <h2 class="t25 sub">Spent Budget Over Time</h2>
      <div class="plot"><svg id="chart" width="1555" height="520"></svg></div>
    </section>
  </main>
</div>

<footer class="foot">
  <p>© 2025 Cooperatives Dashboard. All rights reserved.</p>
  <p class="small2">Created by MSU Interns: Bridget, Seanne, Kim, Azlan, and Cheska</p>
  <p class="small2" style="margin-top:6px"><a href="#">Bridget</a> | <a href="#">Seanne</a> | <a href="#">Kim</a> | <a href="#">Azlan</a> | <a href="#">Cheska</a></p>
</footer>

<script src="https://cdn.jsdelivr.net/npm/bootstrap@5.3.0/dist/js/bootstrap.bundle.min.js"></script>
<script>
  // Mountain peaks
  const brown = [[1080,60],[986,225],[941,262],[888,290],[828,311],[27,720],[57,780],[1826,265],[2006,1053],[1377,2445],[1515,2490],[2032,1803],[2086,1777],[1739,1979],[1717,2073],[1619,2092],[1687,2163],[1818,2122],[1919,2141],[2122,2212],[1744,2385],[1979,2456],[2328,2433],[2373,2553],[2973,1822],[2996,2340],[3005,2385]];
  const pk = (list, c) => list.map(p => `<use href="#peak" x="${p[0]}" y="${p[1]}" fill="${c}"/>`).join('');
  document.getElementById('peaks').innerHTML = pk(brown, '#d08f55') +
    pk([[1175,27],[1235,18],[1177,65],[1152,127]], '#407a65') + pk([[1177,101]], '#45605a') +
    pk([[1343,42],[1448,42],[1260,65],[1268,95],[1328,192]], '#9ecdb0') + pk([[2490,611]], '#d40000');

  // Marker clusters
  const tone = { g: ['181,226,140', '110,204,57'], y: ['241,211,87', '240,194,12'], o: ['253,156,115', '241,128,23'] };
  document.getElementById('clusters').innerHTML = [[1111,214,2,'g'],[1342,469,14,'y'],[1767,191,3,'g'],[1617,746,6,'g'],[1167,739,54,'y'],[1335,829,132,'o'],[844,1065,20,'y'],[1129,1132,57,'y'],[1002,1541,2,'g']]
    .map(([x, y, n, t]) => `<circle cx="${x}" cy="${y}" r="74" fill="rgba(${tone[t][0]},.6)"/><circle cx="${x}" cy="${y}" r="56" fill="rgba(${tone[t][1]},.6)"/><text x="${x}" y="${y + 15}" fill="#000">${n}</text>`).join('');

  // Spent budget chart
  const spent = [17500,26800,26800,0,10000,25300,25300,0,4500,0,21000,21000,1500,0,24800,24800,26200,0,125500,12300,0,0,23400,23400,20000,3000,31900,31900,31900,31900,31900,31900,37800,1500,1500,21200,21200,16000,16000,0,0,0,0,0,0,0];
  const days = ['01-05','01-21','02-04','02-05','02-11','02-19','03-04','03-06','03-09','03-10','03-17','03-18','03-25','03-30','03-30','03-30','03-30','04-02','04-07','04-21','04-25','04-25','04-25'];
  const X = i => 396.5 + i * 18.955, Y = v => 384.2 - v / 140000 * 324.500;
  let s = '';
  for (let k = 0; k <= 7; k++) {
    const y = Math.floor(Y(k * 20000)) + .5;
    s += `<path d="M387 ${y}H${X(45)}" stroke="#146c6b" stroke-opacity=".36" stroke-width="1.300"/><text x="383" y="${y + 4.5}" text-anchor="end" fill="#666">${(k * 20000).toLocaleString('en-US')}</text>`;
  }
  days.forEach((d, k) => {
    const x = Math.floor(X(k * 2)) + .5;
    s += `<path d="M${x} 59V393" stroke="#000" stroke-opacity="${k ? .12 : .2}" stroke-width="1.100"/><text transform="translate(${x + 3} 404) rotate(-50)" text-anchor="end" fill="#666">2025-${d}</text>`;
  });
  const pts = spent.map((v, i) => X(i).toFixed(1) + ' ' + Y(v).toFixed(1));
  s += `<path d="M${pts.join('L')}L${X(45)} ${Y(0)}L${X(0)} ${Y(0)}Z" fill="#146c6b" fill-opacity=".2"/><path d="M${pts.join('L')}" fill="none" stroke="#146c6b" stroke-width="2.500"/>`;
  s += spent.map((v, i) => `<circle cx="${X(i)}" cy="${Y(v)}" r="5" fill="#0b5351"/>`).join('');
  s += `<rect x="702.5" y="32.500" width="50" height="15" fill="#d0e2e1" stroke="#146c6b" stroke-width="2.500"/><text x="760" y="44" fill="#666">Spent Budget</text>`;
  s += `<text x="823" y="490" text-anchor="middle" fill="#146c6b">Time</text><text transform="translate(315 222) rotate(-90)" text-anchor="middle" fill="#146c6b">Budget (₱)</text>`;
  document.getElementById('chart').innerHTML = s;
</script>
</body>
</html>
